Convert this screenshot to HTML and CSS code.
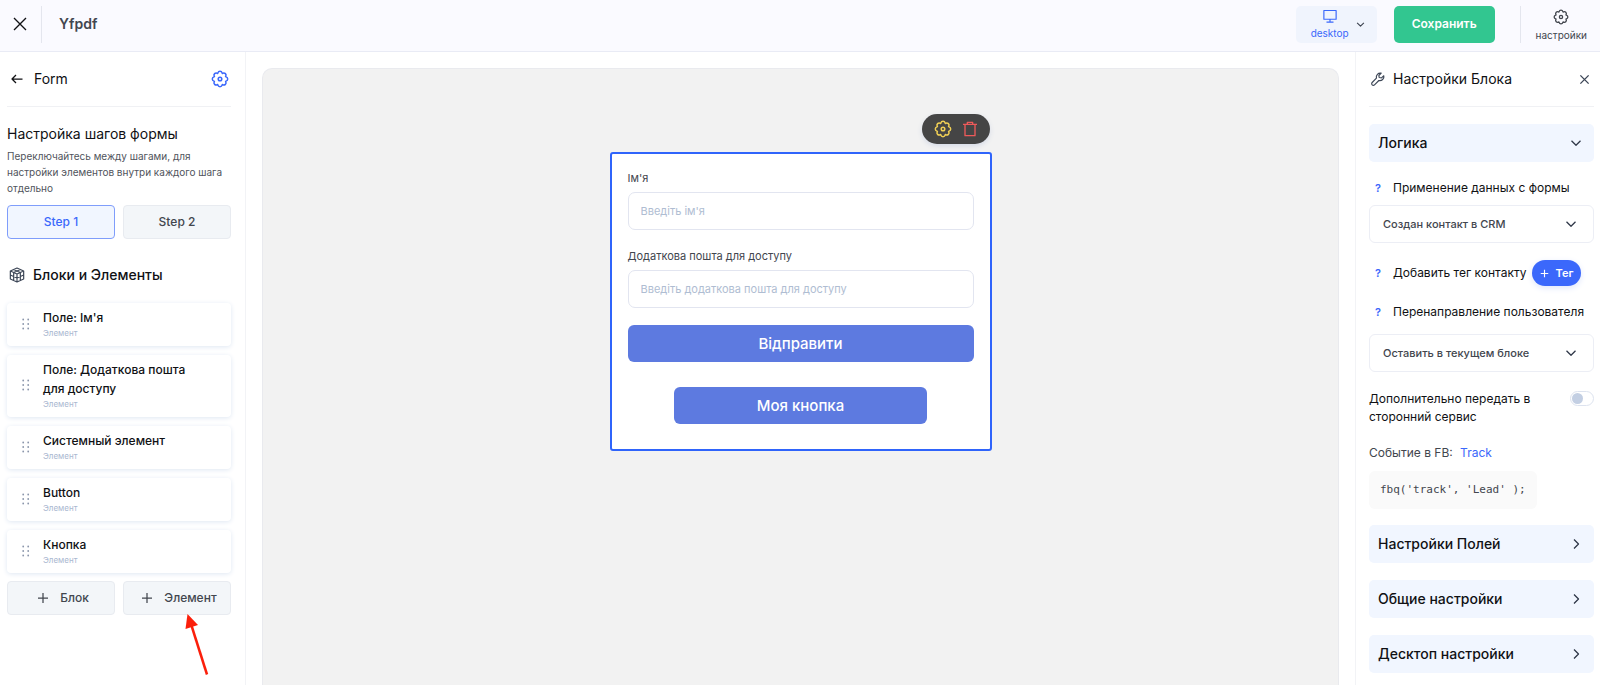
FILE: index.html
```html
<!DOCTYPE html>
<html lang="ru">
<head>
<meta charset="utf-8">
<title>Yfpdf</title>
<link rel="stylesheet" href="styles.css">
</head>
<body>
<svg class="defs" aria-hidden="true">
  <symbol id="gear" viewBox="0 0 24 24"><path d="M9.200 3.900A2.900 2.900 0 0 1 14.800 3.900L15.100 4.600L15.800 4.300A2.900 2.900 0 0 1 19.700 8.200L19.400 8.900L20.100 9.200A2.900 2.900 0 0 1 20.100 14.800L19.400 15.100L19.700 15.800A2.900 2.900 0 0 1 15.800 19.700L15.100 19.400L14.800 20.100A2.900 2.900 0 0 1 9.200 20.100L8.900 19.400L8.200 19.700A2.900 2.900 0 0 1 4.300 15.800L4.600 15.100L3.900 14.800A2.900 2.900 0 0 1 3.900 9.200L4.600 8.900L4.300 8.200A2.900 2.900 0 0 1 8.200 4.300L8.900 4.600Z"/><circle cx="12" cy="12" r="2.400"/></symbol>
  <symbol id="cross" viewBox="0 0 24 24"><path d="M3 3L21 21M21 3L3 21"/></symbol>
  <symbol id="down" viewBox="0 0 24 24"><path d="M3 7.500L12 16.500L21 7.500"/></symbol>
  <symbol id="right" viewBox="0 0 24 24"><path d="M8 3L17 12L8 21"/></symbol>
  <symbol id="plus" viewBox="0 0 24 24"><path d="M12 2V22M2 12H22"/></symbol>
  <symbol id="grip" viewBox="0 0 8 12"><circle cx="1.2" cy="1.5" r=".9"/><circle cx="6.2" cy="1.5" r=".9"/><circle cx="1.2" cy="6" r=".9"/><circle cx="6.2" cy="6" r=".9"/><circle cx="1.2" cy="10.5" r=".9"/><circle cx="6.2" cy="10.5" r=".9"/></symbol>
</svg>

<header class="topbar">
  <button class="icon-btn close" aria-label="Закрыть"><svg class="i16"><use href="#cross"/></svg></button>
  <span class="vline"></span>
  <h1 class="project">Yfpdf</h1>
  <button class="device">
    <span class="device-label">
      <svg class="i14" viewBox="0 0 24 24"><path d="M1.500 2.500H22.500V17.500H1.500ZM12 17.500V22.500M6 22.500H18"/></svg>
      desktop
    </span>
    <svg class="i9"><use href="#down"/></svg>
  </button>
  <button class="save">Сохранить</button>
  <span class="vline"></span>
  <button class="settings"><svg class="i16"><use href="#gear"/></svg>настройки</button>
</header>

<div class="workspace">
  <aside class="side side-left">
    <div class="side-head">
      <button class="icon-btn head-icon" aria-label="Назад"><svg class="i12" viewBox="0 0 24 24"><path d="M23 12H2M10 4L2 12L10 20"/></svg></button>
      <h2 class="side-title">Form</h2>
      <button class="icon-btn blue" aria-label="Настройки формы"><svg class="i18"><use href="#gear"/></svg></button>
    </div>
    <h3 class="steps-title">Настройка шагов формы</h3>
    <p class="steps-text">Переключайтесь между шагами, для настройки элементов внутри каждого шага отдельно</p>
    <div class="pair">
      <button class="tile active">Step 1</button>
      <button class="tile">Step 2</button>
    </div>
    <div class="blocks-head">
      <svg class="i16 cube" viewBox="0 0 24 24"><path d="M12 1.500L22 6V18L12 22.500L2 18V6ZM2 6L12 10.500L22 6M12 10.500V22.500M7 3.700L17 8.200V20.200M17 3.700L7 8.200V20.200M2 12L12 16.500L22 12"/></svg>
      <h3 class="side-title">Блоки и Элементы</h3>
    </div>
    <ul class="cards">
      <li class="card"><svg class="grip"><use href="#grip"/></svg><div><p class="card-name">Поле: Ім'я</p><p class="card-kind">Элемент</p></div></li>
      <li class="card"><svg class="grip"><use href="#grip"/></svg><div><p class="card-name">Поле: Додаткова пошта для доступу</p><p class="card-kind">Элемент</p></div></li>
      <li class="card"><svg class="grip"><use href="#grip"/></svg><div><p class="card-name">Системный элемент</p><p class="card-kind">Элемент</p></div></li>
      <li class="card"><svg class="grip"><use href="#grip"/></svg><div><p class="card-name">Button</p><p class="card-kind">Элемент</p></div></li>
      <li class="card"><svg class="grip"><use href="#grip"/></svg><div><p class="card-name">Кнопка</p><p class="card-kind">Элемент</p></div></li>
    </ul>
    <div class="pair">
      <button class="tile add"><svg class="i12"><use href="#plus"/></svg>Блок</button>
      <div class="pointed">
        <button class="tile add"><svg class="i12"><use href="#plus"/></svg>Элемент</button>
        <svg class="arrow" viewBox="0 0 24 62"><path class="arrow-line" d="M6 10L22 60.500"/><path class="arrow-tip" d="M2.500 0L13 11L.500 15Z"/></svg>
      </div>
    </div>
  </aside>

  <main class="canvas">
    <div class="form-wrap">
      <div class="tools">
        <button class="icon-btn yellow" aria-label="Настроить"><svg class="i18"><use href="#gear"/></svg></button>
        <button class="icon-btn red" aria-label="Удалить"><svg class="i16" viewBox="0 0 24 24"><path d="M1.500 5H22.500M4.500 5V22H19.500V5M8 5V2H16V5"/></svg></button>
      </div>
      <form class="form">
        <label class="label" for="name">Ім'я</label>
        <input class="input" id="name" type="text" placeholder="Введіть ім'я">
        <label class="label" for="mail">Додаткова пошта для доступу</label>
        <input class="input" id="mail" type="text" placeholder="Введіть додаткова пошта для доступу">
        <button class="cta" type="button">Відправити</button>
        <button class="cta cta-short" type="button">Моя кнопка</button>
      </form>
    </div>
  </main>

  <aside class="side side-right">
    <div class="side-head">
      <span class="head-icon"><svg class="i14 wrench" viewBox="0 0 24 24"><path d="M22 6.500L18 10L14 9.500L13.500 6L17.500 2A7 7 0 0 0 9.300 10.600L2 18A2.800 2.800 0 0 0 6 22L13.500 14.600A7 7 0 0 0 22 6.500ZM4.500 19.500H4.600"/></svg></span>
      <h2 class="side-title">Настройки Блока</h2>
      <button class="icon-btn dim" aria-label="Закрыть панель"><svg class="i11"><use href="#cross"/></svg></button>
    </div>
    <button class="section">Логика<svg class="i12"><use href="#down"/></svg></button>
    <div class="row row-first"><span class="help">?</span><label for="data">Применение данных с формы</label></div>
    <div class="select-wrap"><select class="select" id="data"><option>Создан контакт в CRM</option></select><svg class="i12 chev"><use href="#down"/></svg></div>
    <div class="row row-tag"><span class="help">?</span><span>Добавить тег контакту</span><button class="tag"><svg class="i9"><use href="#plus"/></svg>Тег</button></div>
    <div class="row"><span class="help">?</span><label for="redirect">Перенаправление пользователя</label></div>
    <div class="select-wrap"><select class="select" id="redirect"><option>Оставить в текущем блоке</option></select><svg class="i12 chev"><use href="#down"/></svg></div>
    <div class="toggle-row"><label for="extra">Дополнительно передать в сторонний сервис</label><input class="toggle" type="checkbox" id="extra"></div>
    <p class="event">Событие в FB: <a class="track" href="#">Track</a></p>
    <code class="code">fbq('track', 'Lead' );</code>
    <div class="sections">
      <button class="section">Настройки Полей<svg class="i12"><use href="#right"/></svg></button>
      <button class="section">Общие настройки<svg class="i12"><use href="#right"/></svg></button>
      <button class="section">Десктоп настройки<svg class="i12"><use href="#right"/></svg></button>
    </div>
  </aside>
</div>
</body>
</html>
```
FILE: styles.css
```css
* { box-sizing: border-box; margin: 0; padding: 0; }

body {
  display: flex;
  flex-direction: column;
  height: 100vh;
  overflow: hidden;
  background: #fff;
  color: #101114;
  font-family: Inter, "Liberation Sans", sans-serif;
  font-size: 12px;
  line-height: 18px;
}

button, input, select { font: inherit; color: inherit; }
button { display: flex; align-items: center; border: 0; background: none; cursor: pointer; }
svg { flex: none; fill: none; stroke: currentColor; stroke-width: 2; stroke-linejoin: round; }
.defs { position: absolute; width: 0; height: 0; }
.i9 { width: 9px; height: 9px; stroke-width: 3; }
.i11 { width: 11px; height: 11px; stroke-width: 3; }
.i12 { width: 12px; height: 12px; stroke-width: 2.5; }
.i14 { width: 14px; height: 14px; }
.i16 { width: 16px; height: 16px; }
.i18 { width: 18px; height: 18px; }

.topbar {
  display: flex;
  flex: none;
  align-items: center;
  height: 52px;
  padding: 0 13px 3px 12px;
  border-bottom: 1px solid #e9ebf5;
  background: #fafaff;
}
.vline { width: 1px; height: 37px; background: #e4e6ee; }
.close + .vline { margin-left: 13px; }
.project { flex: 1; margin-left: 17px; font-size: 14px; font-weight: 600; color: #42464e; }
.device {
  gap: 7px;
  height: 37px;
  padding: 0 12px 0 15px;
  border-radius: 5px;
  background: #f0f4fd;
  color: #3d4350;
}
.device-label {
  display: flex;
  flex-direction: column;
  align-items: center;
  gap: 2px;
  padding-top: 2px;
  color: #3b68fb;
  font-size: 10px;
  line-height: 16px;
}
.save {
  height: 37px;
  margin: 0 25px 0 17px;
  padding: 0 18px;
  border-radius: 5px;
  background: #32c690;
  color: #fff;
  font-weight: 600;
}
.settings {
  flex-direction: column;
  gap: 2px;
  margin-left: 15px;
  padding-top: 3px;
  font-size: 10px;
  line-height: 16px;
  color: #42464e;
}

.workspace { display: flex; flex: 1; min-height: 0; }
.side { flex: none; overflow: hidden; }
.side-left { width: 246px; padding: 0 14px 0 7px; border-right: 1px solid #f2f3f6; }
.side-right { width: 245px; padding: 0 6px 0 13px; border-left: 1px solid #f2f3f6; }

.side-head { display: flex; align-items: center; height: 55px; border-bottom: 1px solid #f0f1f4; }
.side-head .side-title { flex: 1; }
.head-icon { width: 20px; margin-right: 7px; padding-left: 4px; }
.side-right .head-icon { width: 18px; margin-right: 6px; padding-left: 2px; }
.side-title { font-size: 14px; font-weight: 400; line-height: 20px; }
.blocks-head .side-title { font-weight: 500; }
.side-left .side-head { padding-right: 2px; }
.side-right .side-head { padding-right: 4px; }
.wrench { display: block; }
.wrench, .dim { color: #3d4757; }
.blue { color: #3b68fb; }

.steps-title { margin-top: 17px; font-size: 14px; font-weight: 400; line-height: 20px; }
.steps-text { margin: 4px 0 9px; font-size: 10px; line-height: 16px; color: #50545c; }
.pair { display: grid; grid-template-columns: 1fr 1fr; gap: 8px; }
.tile {
  justify-content: center;
  width: 100%;
  height: 34px;
  border: 1px solid #e8ebf0;
  border-radius: 4px;
  background: #f3f6f9;
  color: #42464e;
  font-weight: 500;
}
.tile.active { border-color: #7f9dfb; background: #f1f6ff; color: #3b68fb; }
.tile.add { gap: 11px; padding-left: 4px; }
.blocks-head { display: flex; align-items: center; gap: 8px; margin: 26px 0 18px 2px; }
.cube { stroke-width: 1.8; color: #3d4757; }

.cards { display: grid; gap: 9px; margin-bottom: 8px; list-style: none; }
.card {
  display: flex;
  align-items: center;
  gap: 13px;
  padding: 5px 40px 7px 15px;
  border-radius: 4px;
  background: #fff;
  box-shadow: 0 1px 5px #dfe7f2;
}
.grip { width: 8px; height: 12px; fill: #8b96ab; stroke: none; }
.card-name { font-weight: 500; line-height: 19px; }
.card-kind { font-size: 8px; line-height: 12px; color: #a9b7d0; }

.pointed { position: relative; }
.arrow { position: absolute; left: 62px; top: 33px; width: 24px; height: 62px; }
.arrow-line { stroke: #fb1f0b; stroke-width: 2.5; }
.arrow-tip { fill: #fb1f0b; stroke: none; }

.canvas {
  flex: 1;
  display: flex;
  justify-content: center;
  align-items: flex-start;
  margin: 16px 16px 0;
  padding-top: 83px;
  border: 1px solid #e9eaee;
  border-bottom: 0;
  border-radius: 10px 10px 0 0;
  background: #f2f2f2;
}
.form-wrap { position: relative; width: 382px; max-width: 100%; }
.tools {
  position: absolute;
  right: 2px;
  bottom: calc(100% + 8px);
  display: flex;
  align-items: center;
  gap: 10px;
  height: 30px;
  padding: 0 12px;
  border-radius: 15px;
  background: #454545;
  box-shadow: 0 2px 5px #d5dae6;
}
.yellow { color: #f0cf55; }
.red { color: #ee5a5a; }
.form {
  display: flex;
  flex-direction: column;
  padding: 15px 16px 16px;
  border: 2px solid #2f64fb;
  border-radius: 3px;
  background: #fff;
}
.label { margin-bottom: 5px; font-size: 11px; color: #42464e; }
.input {
  width: 100%;
  height: 38px;
  margin-bottom: 17px;
  padding: 0 12px;
  border: 1px solid #e2e5f0;
  border-radius: 7px;
  background: #fff;
  font-size: 11px;
}
.input::placeholder { color: #afbdd2; }
.cta {
  justify-content: center;
  height: 37px;
  border-radius: 6px;
  background: #5d7ae0;
  color: #fff;
  font-size: 15px;
  font-weight: 500;
}
.cta-short { align-self: center; width: 73%; margin: 25px 0 9px; }

.section {
  justify-content: space-between;
  width: 100%;
  height: 38px;
  padding: 0 12px 0 9px;
  border-radius: 5px;
  background: #f1f6ff;
  font-size: 14px;
  font-weight: 500;
}
.section svg { color: #2f3748; }
.side-head + .section { margin-top: 17px; }
.row { display: flex; align-items: center; margin-bottom: 13px; white-space: nowrap; }
.row-first { margin: 17px 0 8px; }
.row-tag { margin: 17px 0 17px; }
.help { width: 24px; padding-left: 6px; font-size: 11px; font-weight: 600; color: #3b68fb; }
.tag {
  gap: 6px;
  height: 26px;
  margin-left: 6px;
  padding: 0 8px;
  border-radius: 13px;
  background: #3b68fb;
  box-shadow: 0 2px 6px #dfe6fb;
  color: #fff;
  font-size: 11px;
  font-weight: 600;
}
.select-wrap { position: relative; }
.select {
  display: block;
  width: 100%;
  height: 38px;
  padding: 0 36px 0 13px;
  border: 1px solid #eceef5;
  border-radius: 6px;
  background: #fff;
  color: #42464e;
  font-size: 11px;
  font-weight: 500;
  appearance: none;
}
.chev { position: absolute; right: 17px; top: 13px; color: #2f3748; pointer-events: none; }
.toggle-row { display: flex; justify-content: space-between; align-items: flex-start; gap: 30px; margin: 18px 0; }
.toggle {
  flex: none;
  width: 24px;
  height: 15px;
  margin-top: 1px;
  padding: 1px;
  border: 1px solid #dde3ef;
  border-radius: 8px;
  appearance: none;
}
.toggle::before { content: ""; display: block; width: 11px; height: 11px; border-radius: 50%; background: #c3cfe3; }
.event { margin-bottom: 9px; color: #42464e; }
.track { margin-left: 4px; color: #3b68fb; text-decoration: none; }
.code {
  display: inline-block;
  padding: 10px 11px;
  border-radius: 6px;
  background: #fafafa;
  color: #42464e;
  font-family: "DejaVu Sans Mono", monospace;
  font-size: 11px;
}
.sections { display: grid; gap: 17px; margin-top: 16px; }
```
